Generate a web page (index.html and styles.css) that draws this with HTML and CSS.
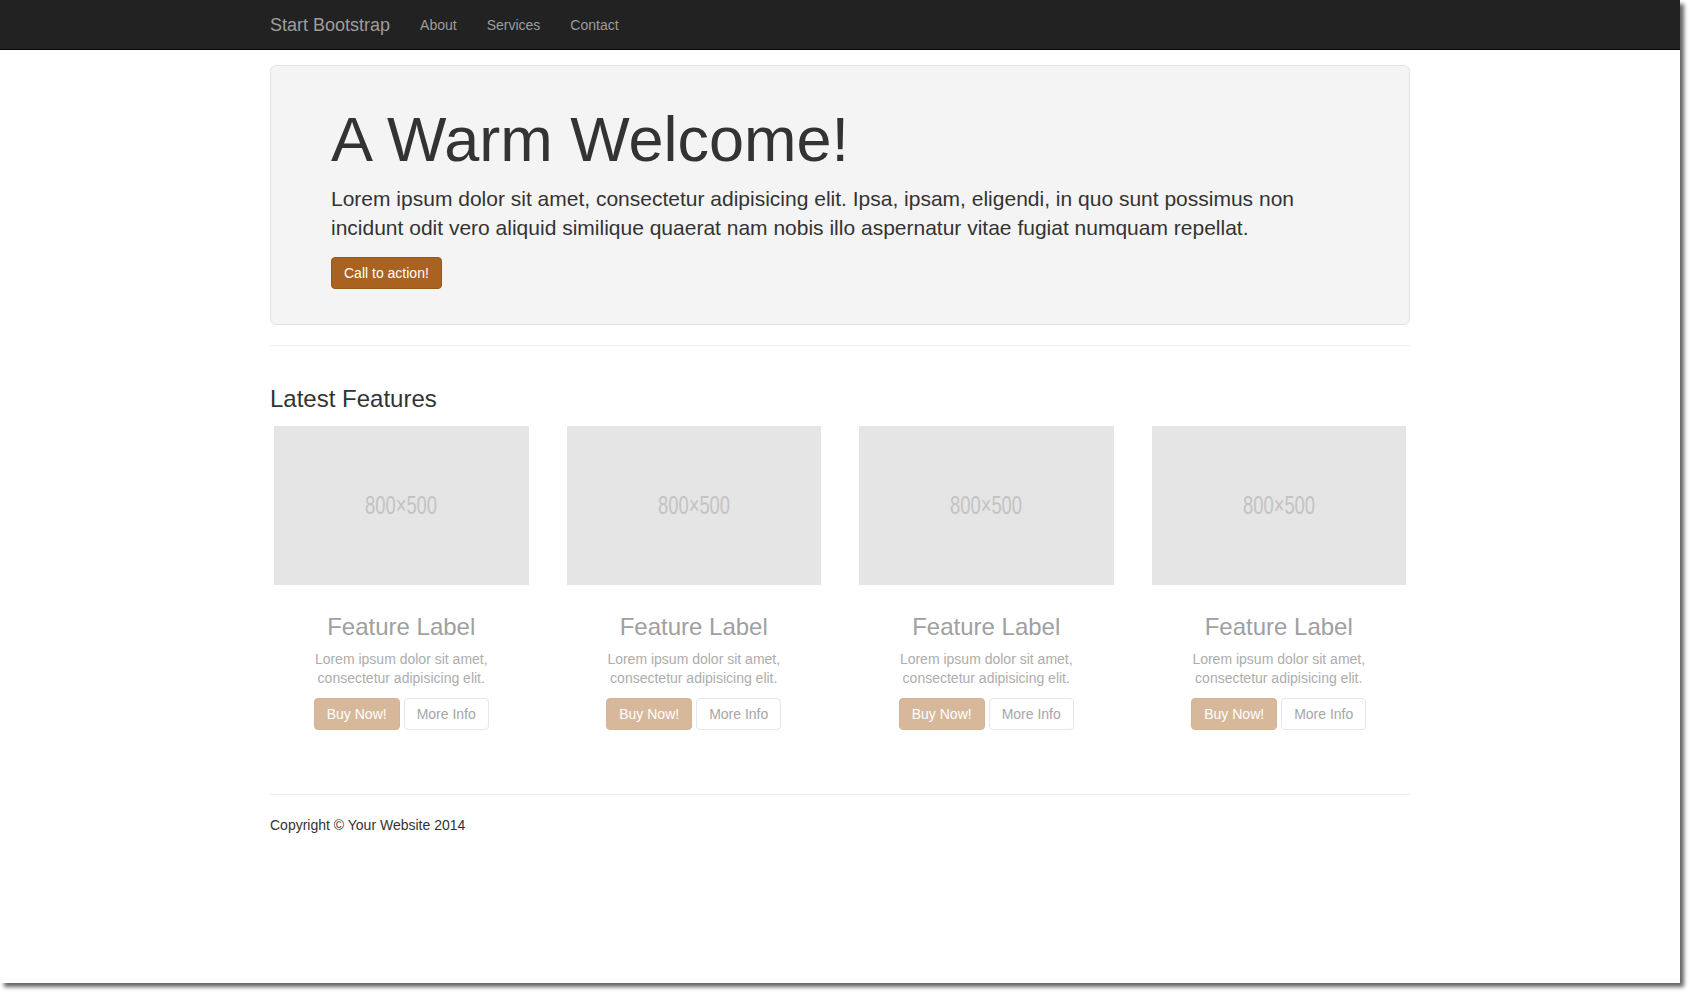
FILE: index.html
```html
<!DOCTYPE html>
<html lang="en">
<head>
<meta charset="utf-8">
<title>Heroic Features - Start Bootstrap</title>
<link rel="stylesheet" href="styles.css">
</head>
<body>
<div class="window">
  <nav class="navbar">
    <div class="container nav-inner">
      <a class="brand" href="#">Start Bootstrap</a>
      <ul class="nav-links">
        <li><a href="#">About</a></li>
        <li><a href="#">Services</a></li>
        <li><a href="#">Contact</a></li>
      </ul>
    </div>
  </nav>
  <main class="container">
    <header class="jumbotron">
      <h1>A Warm Welcome!</h1>
      <p class="lead">Lorem ipsum dolor sit amet, consectetur adipisicing elit. Ipsa, ipsam, eligendi, in quo sunt possimus non incidunt odit vero aliquid similique quaerat nam nobis illo aspernatur vitae fugiat numquam repellat.</p>
      <div class="cta-row"><a class="btn btn-primary" href="#">Call to action!</a></div>
    </header>
    <hr>
    <section class="latest">
      <h3 class="section-title">Latest Features</h3>
      <div class="features">
        <div class="feature">
          <div class="thumb">
            <div class="placeholder"><span class="ph-text">800×500</span></div>
            <div class="caption">
              <h3>Feature Label</h3>
              <p>Lorem ipsum dolor sit amet, consectetur adipisicing elit.</p>
              <div class="actions"><a class="btn btn-buy" href="#">Buy Now!</a><a class="btn btn-more" href="#">More Info</a></div>
            </div>
          </div>
        </div>
        <div class="feature">
          <div class="thumb">
            <div class="placeholder"><span class="ph-text">800×500</span></div>
            <div class="caption">
              <h3>Feature Label</h3>
              <p>Lorem ipsum dolor sit amet, consectetur adipisicing elit.</p>
              <div class="actions"><a class="btn btn-buy" href="#">Buy Now!</a><a class="btn btn-more" href="#">More Info</a></div>
            </div>
          </div>
        </div>
        <div class="feature">
          <div class="thumb">
            <div class="placeholder"><span class="ph-text">800×500</span></div>
            <div class="caption">
              <h3>Feature Label</h3>
              <p>Lorem ipsum dolor sit amet, consectetur adipisicing elit.</p>
              <div class="actions"><a class="btn btn-buy" href="#">Buy Now!</a><a class="btn btn-more" href="#">More Info</a></div>
            </div>
          </div>
        </div>
        <div class="feature">
          <div class="thumb">
            <div class="placeholder"><span class="ph-text">800×500</span></div>
            <div class="caption">
              <h3>Feature Label</h3>
              <p>Lorem ipsum dolor sit amet, consectetur adipisicing elit.</p>
              <div class="actions"><a class="btn btn-buy" href="#">Buy Now!</a><a class="btn btn-more" href="#">More Info</a></div>
            </div>
          </div>
        </div>
      </div>
    </section>
    <hr>
    <footer class="footer">
      <p>Copyright © Your Website 2014</p>
    </footer>
  </main>
</div>
</body>
</html>
```

FILE: styles.css
```css
* {
  box-sizing: border-box;
}

html,
body {
  margin: 0;
  padding: 0;
  background: #fff;
}

body {
  padding-bottom: 16px;
  font-family: "Liberation Sans", Arial, Helvetica, sans-serif;
  font-size: 14px;
  line-height: 20px;
  color: #333;
}

.window {
  width: 1680px;
  height: 983px;
  background: #fff;
  box-shadow: 4px 4px 4px rgba(0, 0, 0, 0.6);
  overflow: hidden;
}

.container {
  width: 1140px;
  margin: 0 auto;
}

/* Navbar */
.navbar {
  height: 50px;
  background: #222;
  border-bottom: 1px solid #080808;
}

.nav-inner {
  display: flex;
  align-items: flex-start;
}

.brand {
  padding: 15px 15px 14px 0;
  font-size: 18px;
  line-height: 20px;
  color: #9d9d9d;
  text-decoration: none;
}

.nav-links {
  display: flex;
  margin: 0;
  padding: 0;
  list-style: none;
}

.nav-links a {
  display: block;
  padding: 15px;
  line-height: 20px;
  color: #9d9d9d;
  text-decoration: none;
}

/* Jumbotron */
.jumbotron {
  margin: 15px 0 20px;
  padding: 30px 60px 35px;
  background: #f4f4f4;
  border: 1px solid #e3e3e3;
  border-radius: 6px;
}

.jumbotron h1 {
  margin: 12px 0 13px;
  font-size: 63px;
  line-height: 63px;
  font-weight: normal;
  color: #333;
}

.lead {
  margin: 0 0 14px;
  font-size: 21px;
  line-height: 1.4;
  color: #333;
}

.cta-row {
  display: flex;
}

.btn {
  display: inline-block;
  padding: 5px 12px;
  font-size: 14px;
  line-height: 20px;
  border: 1px solid transparent;
  border-radius: 4px;
  text-decoration: none;
  white-space: nowrap;
}

.btn-primary {
  background: #a9621f;
  border-color: #97571b;
  color: #fff;
}

hr {
  height: 0;
  margin: 20px 0;
  border: 0;
  border-top: 1px solid #eee;
}

/* Features */
.latest {
  display: flow-root;
}

.section-title {
  margin: 20px 0 10px;
  font-size: 24px;
  line-height: 26.4px;
  font-weight: normal;
  color: #333;
}

.features {
  display: grid;
  grid-template-columns: repeat(4, 1fr);
  column-gap: 30px;
}

.feature {
  margin-bottom: 21px;
  text-align: center;
}

.thumb {
  padding: 4px;
}

.placeholder {
  display: flex;
  align-items: center;
  justify-content: center;
  aspect-ratio: 8 / 5;
  background: #e5e5e5;
}

.ph-text {
  font-size: 25px;
  line-height: 1;
  color: #c3c3c3;
  transform: scaleX(0.735);
}

.caption {
  padding: 9px;
}

.caption h3 {
  margin: 20px 0 9px;
  font-size: 24px;
  line-height: 26.4px;
  font-weight: normal;
  color: #a0a0a0;
}

.caption p {
  margin: 0 0 10px;
  line-height: 19px;
  color: #adadad;
}

.actions {
  display: flex;
  justify-content: center;
  gap: 4px;
  margin-bottom: 10px;
}

.btn-buy {
  background: #d8b89a;
  border-color: #d5b495;
  color: #fff;
}

.btn-more {
  background: #fff;
  border-color: #e6e6e6;
  color: #a6a6a6;
}

/* Footer */
.footer p {
  margin: 0 0 10px;
  color: #333;
}
```
